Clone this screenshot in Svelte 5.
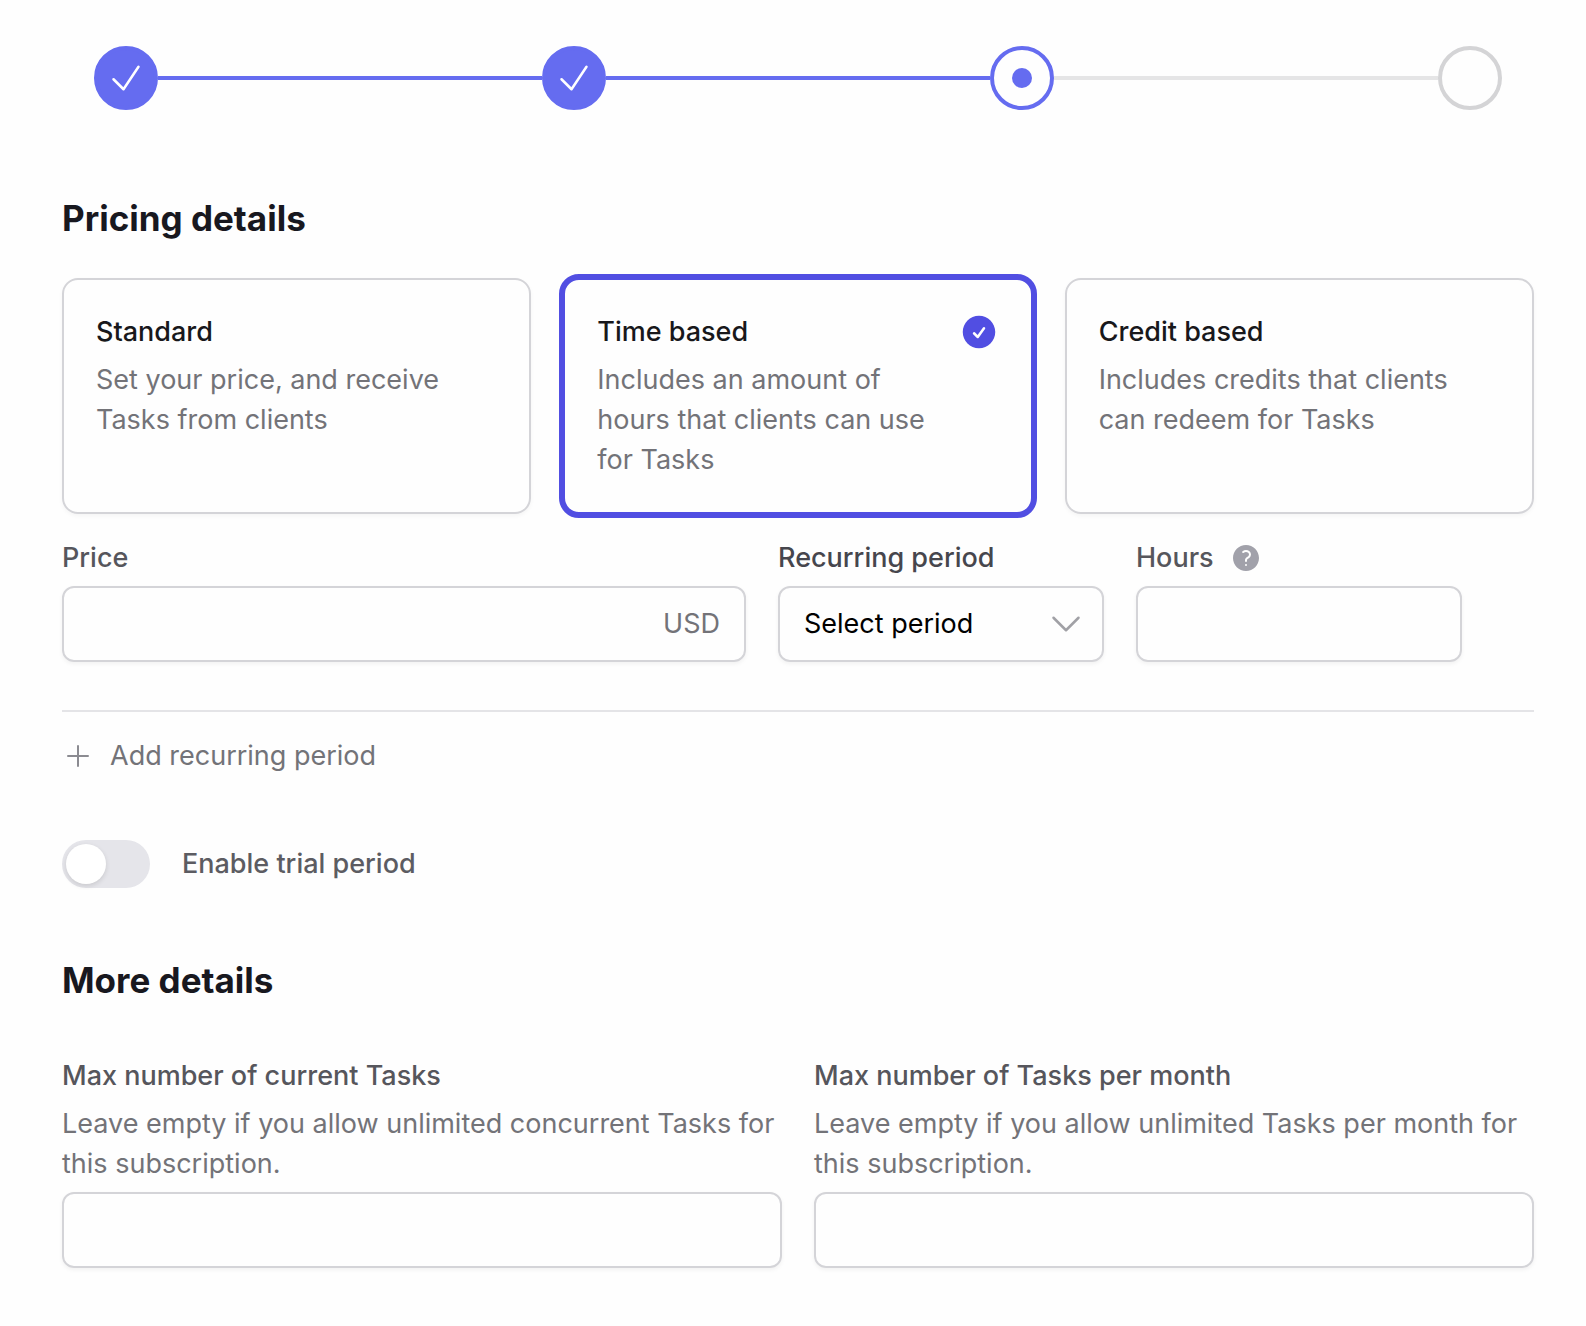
<script>
  const steps = ['complete', 'complete', 'current', 'upcoming'];

  const plans = [
    { id: 'standard', title: 'Standard', text: 'Set your price, and receive Tasks from clients' },
    { id: 'time', title: 'Time based', text: 'Includes an amount of hours that clients can use for Tasks' },
    { id: 'credit', title: 'Credit based', text: 'Includes credits that clients can redeem for Tasks' }
  ];

  const limits = [
    {
      id: 'max-current',
      label: 'Max number of current Tasks',
      hint: 'Leave empty if you allow unlimited concurrent Tasks for this subscription.'
    },
    {
      id: 'max-month',
      label: 'Max number of Tasks per month',
      hint: 'Leave empty if you allow unlimited Tasks per month for this subscription.'
    }
  ];

  let plan = $state('time');
  let price = $state('');
  let period = $state('');
  let hours = $state('');
  let trial = $state(false);
</script>

<main class="page">
  <nav aria-label="Progress">
    <ol class="steps">
      {#each steps as status, i}
        <li class="step">
          <button type="button" class="dot {status}" aria-label="Step {i + 1}" aria-current={status === 'current' ? 'step' : undefined}>
            {#if status === 'complete'}
              <svg class="tick" viewBox="0 0 24 24" aria-hidden="true"><path d="M4.5 12.75l6 6 9-13.5" /></svg>
            {:else if status === 'current'}
              <span class="bullet"></span>
            {/if}
          </button>
          {#if i < steps.length - 1}
            <span class="line" class:done={status === 'complete'}></span>
          {/if}
        </li>
      {/each}
    </ol>
  </nav>

  <form class="form">
    <h2>Pricing details</h2>

    <div class="plans" role="radiogroup" aria-label="Pricing type">
      {#each plans as p}
        <label class="plan" class:selected={plan === p.id}>
          <input class="hidden-control" type="radio" name="plan" value={p.id} bind:group={plan} />
          <span class="plan-body">
            <span class="plan-title">{p.title}</span>
            <span class="plan-text">{p.text}</span>
          </span>
          <svg class="plan-check" viewBox="0 0 24 24" aria-hidden="true">
            <path fill-rule="evenodd" d="M2.25 12c0-5.385 4.365-9.75 9.75-9.75s9.75 4.365 9.75 9.75-4.365 9.75-9.75 9.75S2.25 17.385 2.25 12zm13.36-1.814a.75.75 0 10-1.22-.872l-3.236 4.53L9.53 12.22a.75.75 0 00-1.06 1.06l2.25 2.25a.75.75 0 001.14-.094l3.75-5.25z" />
          </svg>
        </label>
      {/each}
    </div>

    <div class="pricing">
      <div class="field wide">
        <label class="label" for="price">Price</label>
        <div class="box">
          <input id="price" class="bare" type="text" inputmode="decimal" bind:value={price} />
          <span class="unit">USD</span>
        </div>
      </div>
      <div class="field">
        <label class="label strong" for="period">Recurring period</label>
        <div class="box select-box">
          <select id="period" class="bare" bind:value={period}>
            <option value="">Select period</option>
            <option value="week">Weekly</option>
            <option value="month">Monthly</option>
            <option value="year">Yearly</option>
          </select>
          <svg class="chevron" viewBox="0 0 24 24" aria-hidden="true"><path d="M19.5 8.25l-7.5 7.5-7.5-7.5" /></svg>
        </div>
      </div>
      <div class="field">
        <div class="label-row">
          <label class="label" for="hours">Hours</label>
          <button type="button" class="help" aria-label="About hours">
            <svg viewBox="0 0 24 24" aria-hidden="true">
              <path fill-rule="evenodd" d="M2.25 12c0-5.385 4.365-9.75 9.75-9.75s9.75 4.365 9.75 9.75-4.365 9.75-9.75 9.75S2.25 17.385 2.25 12zm11.378-3.917c-.89-.777-2.366-.777-3.255 0a.75.75 0 01-.988-1.129c1.454-1.272 3.776-1.272 5.23 0 1.513 1.324 1.513 3.518 0 4.842a3.75 3.75 0 01-.837.552c-.676.328-1.028.774-1.028 1.152v.75a.75.75 0 01-1.5 0v-.75c0-1.279 1.06-2.107 1.875-2.502.182-.088.351-.199.503-.331.83-.727.83-1.857 0-2.584zM12 18a.75.75 0 100-1.5.75.75 0 000 1.5z" />
            </svg>
          </button>
        </div>
        <div class="box">
          <input id="hours" class="bare" type="text" inputmode="numeric" bind:value={hours} />
        </div>
      </div>
    </div>

    <hr />

    <button type="button" class="add">
      <svg viewBox="0 0 24 24" aria-hidden="true"><path d="M12 4.5v15m7.5-7.5h-15" /></svg>
      Add recurring period
    </button>

    <label class="toggle">
      <input class="hidden-control" type="checkbox" role="switch" bind:checked={trial} />
      <span class="track" class:on={trial}><span class="knob"></span></span>
      <span class="toggle-text">Enable trial period</span>
    </label>

    <h2>More details</h2>

    <div class="limits">
      {#each limits as l}
        <div class="field">
          <label class="label" for={l.id}>{l.label}</label>
          <p class="hint" id="{l.id}-hint">{l.hint}</p>
          <div class="box">
            <input id={l.id} class="bare" type="text" inputmode="numeric" aria-describedby="{l.id}-hint" />
          </div>
        </div>
      {/each}
    </div>
  </form>
</main>

<style>
  :global(body) {
    background: #fefefe;
  }

  .page,
  .page * {
    box-sizing: border-box;
  }

  .page {
    padding: 46px 52px 58px 62px;
    font-family: Inter, "Liberation Sans", sans-serif;
    font-size: 27px;
    line-height: 40px;
    color: #737378;
  }

  button,
  input,
  select {
    font: inherit;
    color: inherit;
    margin: 0;
    padding: 0;
    border: 0;
    background: none;
  }

  button {
    cursor: pointer;
  }

  .steps {
    display: flex;
    list-style: none;
    margin: 0;
    padding: 0 32px;
  }

  .step {
    display: flex;
    align-items: center;
    flex: 1;
  }

  .step:last-child {
    flex: none;
  }

  .dot {
    display: flex;
    align-items: center;
    justify-content: center;
    flex: none;
    width: 64px;
    height: 64px;
    border: 4px solid #d4d4d6;
    border-radius: 50%;
  }

  .dot.complete {
    border-color: #656cf0;
    background: #656cf0;
  }

  .dot.current {
    border-color: #656cf0;
  }

  .bullet {
    width: 20px;
    height: 20px;
    border-radius: 50%;
    background: #656cf0;
  }

  .line {
    flex: 1;
    height: 4px;
    background: #e5e5e6;
  }

  .line.done {
    background: #656cf0;
  }

  svg {
    display: block;
    flex: none;
    fill: none;
    stroke-width: 1.5;
    stroke-linecap: round;
    stroke-linejoin: round;
  }

  .tick {
    width: 40px;
    height: 40px;
    stroke: #fff;
  }

  .form {
    display: flex;
    flex-direction: column;
    padding-top: 80px;
  }

  h2 {
    margin: 0;
    font-size: 35px;
    line-height: 56px;
    font-weight: 700;
    color: #18181f;
  }

  .plans {
    display: grid;
    grid-template-columns: repeat(3, 1fr);
    gap: 32px;
    margin-top: 32px;
  }

  .plan {
    position: relative;
    display: flex;
    padding: 32px;
    border: 2px solid #d4d4d8;
    border-radius: 16px;
    box-shadow: 0 2px 4px rgba(0, 0, 0, 0.04);
    cursor: pointer;
  }

  /* The thicker border grows outwards so the content stays in place. */
  .plan.selected {
    margin: -4px;
    border: 6px solid #514ee2;
    border-radius: 20px;
    box-shadow: none;
  }

  .hidden-control {
    position: absolute;
    width: 1px;
    height: 1px;
    opacity: 0;
    appearance: none;
  }

  .plan-body {
    display: flex;
    flex: 1;
    flex-direction: column;
    gap: 8px;
  }

  .plan-title {
    font-weight: 500;
    color: #18181b;
  }

  .plan-check {
    width: 40px;
    height: 40px;
    fill: #514ee2;
    visibility: hidden;
  }

  .selected .plan-check {
    visibility: visible;
  }

  .pricing {
    display: grid;
    grid-template-columns: repeat(12, 1fr);
    gap: 32px;
    margin-top: 24px;
    padding-right: 72px;
  }

  .pricing .field {
    grid-column: span 3;
  }

  .pricing .wide {
    grid-column: span 6;
  }

  .field {
    display: flex;
    flex-direction: column;
    gap: 8px;
    min-width: 0;
  }

  .label {
    font-weight: 500;
    color: #56565c;
  }

  .label.strong {
    color: #46464d;
  }

  .label-row {
    display: flex;
    align-items: center;
    gap: 16px;
  }

  .help svg {
    width: 32px;
    height: 32px;
    fill: #a1a1aa;
  }

  .box {
    display: flex;
    align-items: center;
    height: 76px;
    padding: 0 24px;
    border: 2px solid #d4d4d8;
    border-radius: 12px;
    box-shadow: 0 2px 4px rgba(0, 0, 0, 0.05);
  }

  .bare {
    flex: 1;
    min-width: 0;
    height: 100%;
    outline: 0;
    appearance: none;
    color: #000;
  }

  .box:focus-within {
    border-color: #514ee2;
  }

  .select-box {
    padding-right: 16px;
  }

  .chevron {
    width: 40px;
    height: 40px;
    stroke: #a1a1a6;
    pointer-events: none;
  }

  hr {
    width: 100%;
    height: 2px;
    margin: 48px 0 24px;
    border: 0;
    background: #e4e4e7;
  }

  .add {
    display: flex;
    align-items: center;
    align-self: flex-start;
    gap: 16px;
  }

  .add svg {
    width: 32px;
    height: 32px;
    stroke: #8b8b91;
  }

  .toggle {
    position: relative;
    display: flex;
    align-items: center;
    align-self: flex-start;
    gap: 32px;
    margin: 64px 0;
    cursor: pointer;
  }

  .track {
    display: flex;
    width: 88px;
    height: 48px;
    padding: 4px;
    border-radius: 24px;
    background: #e5e5ea;
  }

  .track.on {
    justify-content: flex-end;
    background: #514ee2;
  }

  .knob {
    width: 40px;
    height: 40px;
    border-radius: 50%;
    background: #fff;
    box-shadow: 0 2px 5px rgba(0, 0, 0, 0.12);
  }

  .toggle-text {
    font-weight: 500;
    color: #5c5c62;
  }

  .limits {
    display: grid;
    grid-template-columns: repeat(2, 1fr);
    gap: 32px;
    margin-top: 48px;
  }

  .hint {
    margin: 0;
  }
</style>
